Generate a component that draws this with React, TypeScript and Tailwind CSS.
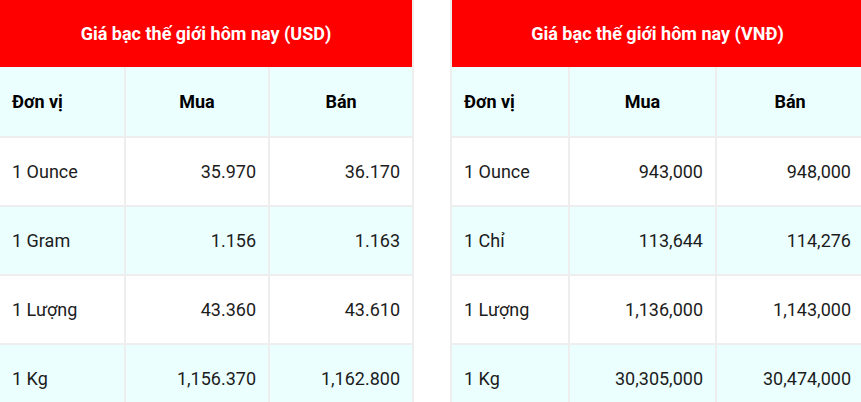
import React from "react";

type Row = { unit: string; buy: string; sell: string };

const usdRows: Row[] = [
  { unit: "1 Ounce", buy: "35.970", sell: "36.170" },
  { unit: "1 Gram", buy: "1.156", sell: "1.163" },
  { unit: "1 Lượng", buy: "43.360", sell: "43.610" },
  { unit: "1 Kg", buy: "1,156.370", sell: "1,162.800" },
];

const vndRows: Row[] = [
  { unit: "1 Ounce", buy: "943,000", sell: "948,000" },
  { unit: "1 Chỉ", buy: "113,644", sell: "114,276" },
  { unit: "1 Lượng", buy: "1,136,000", sell: "1,143,000" },
  { unit: "1 Kg", buy: "30,305,000", sell: "30,474,000" },
];

function PriceTable({
  title,
  rows,
  cols,
  className,
}: {
  title: string;
  rows: Row[];
  cols: string;
  className?: string;
}) {
  const cell = "border-r-2 border-b-2 border-[#eeeeee] flex items-center px-3";
  return (
    <div className={`shrink-0 border-l-2 border-[#eeeeee] ${className ?? ""}`}>
      <div className="h-[67px] bg-[#ff0000] border-r-2 border-[#eeeeee] flex items-center justify-center text-white font-bold text-lg">
        {title}
      </div>
      <div className={`grid ${cols} bg-[#ebffff] font-bold text-black`}>
        <div className={`${cell} h-[71px]`}>Đơn vị</div>
        <div className={`${cell} h-[71px] justify-center`}>Mua</div>
        <div className={`${cell} h-[71px] justify-center`}>Bán</div>
      </div>
      {rows.map((r, i) => (
        <div
          key={r.unit}
          className={`grid ${cols} text-[#1c1c1c] ${i % 2 === 1 ? "bg-[#ebffff]" : "bg-white"}`}
        >
          <div className={`${cell} h-[69px]`}>{r.unit}</div>
          <div className={`${cell} h-[69px] justify-end`}>{r.buy}</div>
          <div className={`${cell} h-[69px] justify-end`}>{r.sell}</div>
        </div>
      ))}
    </div>
  );
}

export default function App() {
  return (
    <div
      className="w-[861px] h-[402px] overflow-hidden bg-white flex gap-[36px] text-lg"
      style={{ fontFamily: "Roboto, 'Noto Sans', sans-serif" }}
    >
      <PriceTable
        title="Giá bạc thế giới hôm nay (USD)"
        rows={usdRows}
        cols="grid-cols-[126px_144px_144px]"
        className="w-[416px] -ml-[2px]"
      />
      <PriceTable
        title="Giá bạc thế giới hôm nay (VNĐ)"
        rows={vndRows}
        cols="grid-cols-[118px_147px_148px]"
        className="w-[415px]"
      />
    </div>
  );
}
